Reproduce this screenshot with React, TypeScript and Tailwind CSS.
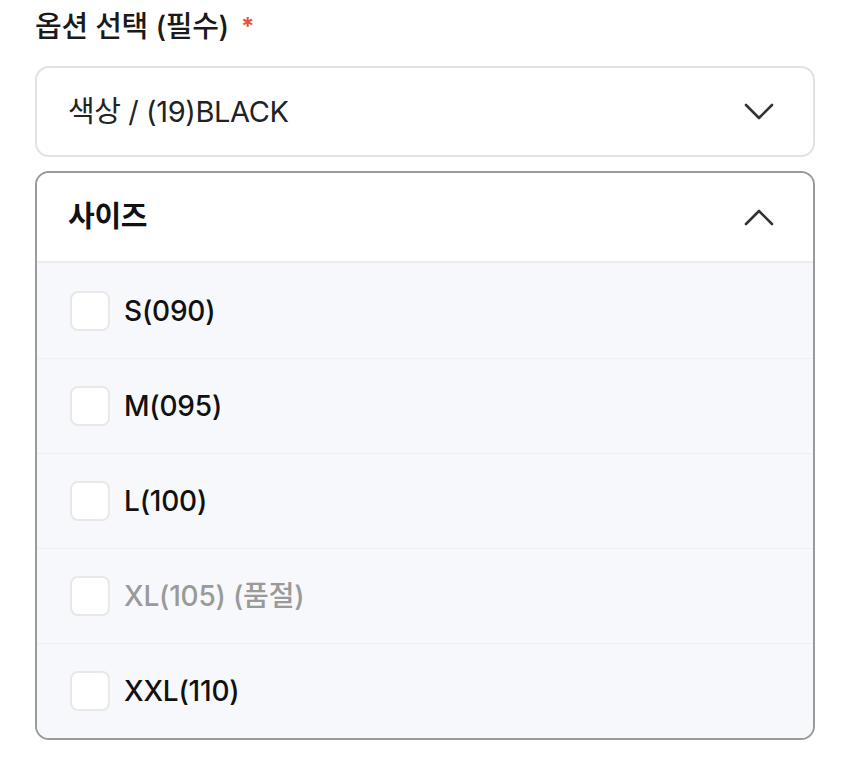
const sizes = [
  { label: "S(090)", soldOut: false },
  { label: "M(095)", soldOut: false },
  { label: "L(100)", soldOut: false },
  { label: "XL(105)", soldOut: true },
  { label: "XXL(110)", soldOut: false },
];

function Chevron({ up = false }: { up?: boolean }) {
  return (
    <svg viewBox="0 0 32 18" fill="none" className="h-[18px] w-[32px] text-[#333]">
      <path
        d={up ? "M3 16L16 3l13 13" : "M3 2l13 13L29 2"}
        stroke="currentColor"
        strokeWidth="2.6"
        strokeLinecap="round"
        strokeLinejoin="round"
      />
    </svg>
  );
}

export default function App() {
  return (
    <div
      className="min-h-screen bg-white px-[35px] pt-[7px] text-[#111]"
      style={{ fontFamily: 'Inter, "Noto Sans CJK KR", sans-serif' }}
    >
      <h2 className="flex items-center gap-[12px] text-[29px] font-medium leading-[40px] tracking-[-0.3px] text-[#1a1a1a]">
        옵션 선택 (필수)
        <span className="text-[24px] font-bold text-[#e5533d]">*</span>
      </h2>

      <button className="mt-[19px] flex h-[91px] w-full items-center justify-between rounded-[14px] border-2 border-[#e2e2e2] bg-white pl-[31px] pr-[38px] text-left">
        <span className="text-[29px] tracking-[-0.4px] text-[#222]">색상 / (19)BLACK</span>
        <Chevron />
      </button>

      <div className="mt-[14px] overflow-hidden rounded-[14px] border-2 border-[#9a9a9a]">
        <div className="flex h-[90px] items-center justify-between border-b-2 border-[#ececec] bg-white pl-[31px] pr-[38px]">
          <span className="text-[29px] font-bold tracking-[-0.3px]">사이즈</span>
          <Chevron up />
        </div>
        <ul className="bg-[#f7f8fb]">
          {sizes.map((s, i) => (
            <li
              key={s.label}
              className={`flex h-[95px] items-center gap-[14px] pl-[33px] ${
                i > 0 ? "border-t border-[#eeeff2]" : ""
              }`}
            >
              <span className="h-[40px] w-[40px] rounded-[8px] border-2 border-[#e8e8e8] bg-white" />
              <span
                className={`text-[28px] font-medium tracking-[-0.2px] ${
                  s.soldOut ? "text-[#9a9a9a]" : "text-[#111]"
                }`}
              >
                {s.label}
                {s.soldOut && " (품절)"}
              </span>
            </li>
          ))}
        </ul>
      </div>
    </div>
  );
}
